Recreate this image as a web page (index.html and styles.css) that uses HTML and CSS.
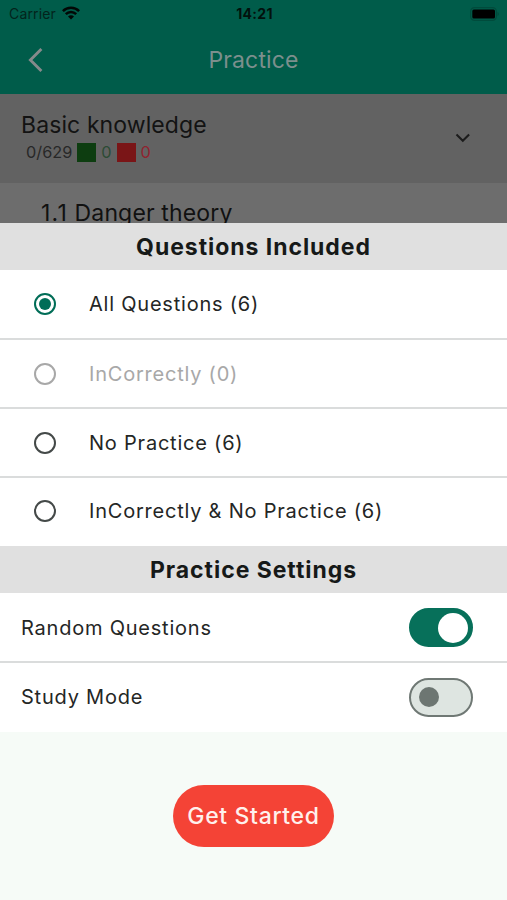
FILE: index.html
```html
<!DOCTYPE html>
<html lang="en">
<head>
<meta charset="utf-8">
<title>Practice</title>
<link rel="stylesheet" href="styles.css">
</head>
<body>
<div class="screen">
  <header class="top">
    <div class="status">
      <div class="carrier"><span>Carrier</span>
        <svg width="18" height="14" viewBox="0 0 18 14" fill="none" stroke="#020705" stroke-width="2.5"><path d="M.9 5.2C5.4.7 12.6.7 17.1 5.2M3.8 8.2c3-3 7.4-3 10.4 0"/><path d="M9 13.6 6 10.5c1.7-1.6 4.3-1.6 6 0z" fill="#020705" stroke="none"/></svg>
      </div>
      <div class="time">14:21</div>
      <svg class="battery" width="30" height="14" viewBox="0 0 30 14"><rect x=".6" y=".6" width="25.8" height="12.8" rx="4" fill="none" stroke="#004b3c" stroke-width="1.2"/><rect x="2.3" y="2.5" width="22.7" height="9" rx="1.5" fill="#000"/><path d="M27.5 4.8c1.8.8 1.8 3.6 0 4.4z" fill="#004b3c"/></svg>
    </div>
    <div class="nav">
      <svg class="back" width="16" height="24" viewBox="0 0 16 24" fill="none" stroke="#858a8b" stroke-width="2.9"><path d="M13.4 1 2.4 12l11 11"/></svg>
      <h1>Practice</h1>
    </div>
  </header>
  <section class="topic">
    <div class="topic-info">
      <div class="topic-name">Basic knowledge</div>
      <div class="score"><span>0/629</span><i class="box right"></i><span class="n-right">0</span><i class="box wrong"></i><span class="n-wrong">0</span></div>
    </div>
    <svg width="16" height="10" viewBox="0 0 16 10" fill="none" stroke="#1c1c1c" stroke-width="2.1"><path d="m1.5 1.5 6.3 6.2 6.3-6.2"/></svg>
  </section>
  <div class="lesson"><span class="number">1.1</span> Danger theory</div>
  <main class="sheet">
    <h2>Questions Included</h2>
    <div class="row option first selected"><i class="radio"></i><span>All Questions (6)</span></div>
    <div class="row option disabled"><i class="radio"></i><span>InCorrectly (0)</span></div>
    <div class="row option"><i class="radio"></i><span>No Practice (6)</span></div>
    <div class="row option last"><i class="radio"></i><span>InCorrectly &amp; No Practice (6)</span></div>
    <h2>Practice Settings</h2>
    <div class="row setting first"><span>Random Questions</span><i class="switch on"></i></div>
    <div class="row setting last"><span>Study Mode</span><i class="switch"></i></div>
    <div class="action"><button>Get Started</button></div>
  </main>
</div>
</body>
</html>
```
FILE: styles.css
```css
* { box-sizing: border-box; }
body { margin: 0; font-family: Inter, "Liberation Sans", sans-serif; color: #242625; }
h1, h2 { margin: 0; }
i { display: block; flex: none; }
svg { display: block; flex: none; }
span { white-space: nowrap; }
.screen { width: 507px; height: 900px; overflow: hidden; display: flex; flex-direction: column; background: #6d6d6d; }

.top { height: 94px; flex: none; background: #005c4a; }
.status { height: 27px; display: grid; grid-template-columns: 1fr auto 1fr; align-items: center; padding: 0 7px 0 9px; }
.carrier { display: flex; align-items: center; gap: 6px; font-size: 14px; letter-spacing: .15px; color: #03241c; }
.carrier svg { margin-top: -2px; }
.time { font-size: 14px; font-weight: 700; letter-spacing: .3px; color: #02110d; }
.battery { justify-self: end; }
.nav { height: 67px; display: grid; grid-template-columns: 28px 1fr 28px; align-items: center; }
.back { justify-self: end; margin-right: -16px; margin-top: -1px; }
h1 { font-size: 23px; line-height: 28px; font-weight: 400; letter-spacing: .15px; text-align: center; color: #7c8f8d; margin-top: -1px; }

.topic { height: 89px; flex: none; background: #626262; display: flex; justify-content: space-between; padding: 17px 36px 0 21px; }
.topic > svg { margin-top: 22px; }
.topic-name { font-size: 23px; line-height: 28px; letter-spacing: .1px; color: #131313; }
.score { display: flex; align-items: center; height: 24px; padding-left: 5px; font-size: 16.3px; color: #282828; margin-top: 1px; }
.score span { margin-top: -1px; }
.box { width: 19px; height: 19px; margin: 0 5px; }
.right { background: #0d3d10; }
.wrong { background: #7a1517; }
.n-right { color: #2c4b35; }
.n-wrong { color: #90232f; }
.lesson { height: 40px; flex: none; overflow: hidden; white-space: nowrap; padding: 16px 0 0 41px; font-size: 23px; line-height: 28px; letter-spacing: .15px; color: #111; }
.number { letter-spacing: 1.2px; }

.sheet { flex: 1; background: #f6fbf7; }
h2 { height: 47px; display: flex; align-items: center; justify-content: center; background: #e0e0e0; color: #161918; font-size: 23px; font-weight: 700; letter-spacing: .95px; }
.row { height: 69px; display: flex; align-items: center; background: #fff; border-top: 2px solid #dadcdc; font-size: 20px; letter-spacing: .78px; }
.row.first { height: 68px; border-top: 0; }
.option { padding-left: 34px; gap: 33px; }
.option.last { height: 70px; padding-bottom: 2px; }
.radio { width: 22px; height: 22px; border: 2px solid #444948; border-radius: 50%; display: grid; place-items: center; }
.selected .radio { border-color: #006d57; }
.selected .radio::after { content: ""; width: 12px; height: 12px; border-radius: 50%; background: #006d57; }
.disabled { color: #a8a8a8; }
.disabled .radio { border-color: #a8a8a8; }
.setting { justify-content: space-between; padding: 0 34px 0 21px; }
.setting.first { padding-top: 1px; }
.setting.last { height: 71px; padding-bottom: 1px; }
.switch { width: 64px; height: 39px; border-radius: 20px; border: 2px solid #6f7874; background: #dee5e1; display: flex; align-items: center; padding: 0 8px; }
.switch::after { content: ""; width: 20px; height: 20px; border-radius: 50%; background: #6d7672; }
.switch.on { background: #07705a; border-color: #07705a; justify-content: flex-end; padding: 0 3px; }
.switch.on::after { width: 30px; height: 30px; background: #fff; }
.action { display: flex; justify-content: center; padding-top: 53px; }
button { width: 161px; height: 62px; border: 0; border-radius: 31px; background: #f44336; color: #fff1ed; font: 500 23px Inter, "Liberation Sans", sans-serif; letter-spacing: .65px; padding: 0; white-space: nowrap; }
```
